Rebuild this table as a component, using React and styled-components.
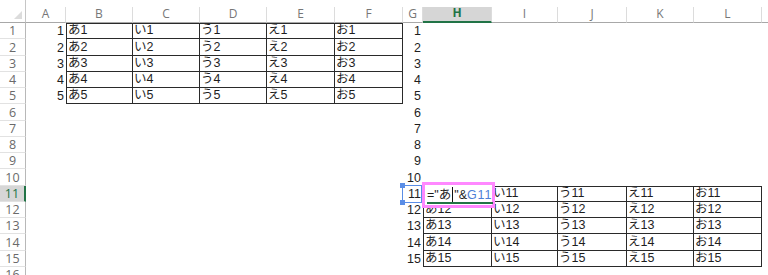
import styled, { createGlobalStyle } from "styled-components";

const GlobalStyle = createGlobalStyle`
  html, body { margin: 0; padding: 0; background: #fff; overflow: hidden; }
  body { font-family: "Liberation Sans", "Noto Sans CJK JP", sans-serif; }
`;

const colWidths = [26, 40, 67, 67, 67, 68, 68, 20, 69, 66, 69, 67, 68];
const letters = ["A", "B", "C", "D", "E", "F", "G", "H", "I", "J", "K", "L"];
const kana = ["あ", "い", "う", "え", "お"];
const green = "#217346";

const Sheet = styled.div`
  position: relative;
  display: grid;
  grid-template-columns: ${colWidths.map((w) => w + "px").join(" ")} 1fr;
  grid-template-rows: 23px repeat(16, 16.27px);
  width: 768px;
  height: 275px;
  overflow: hidden;
`;

const Corner = styled.div`
  position: relative;
  border-right: 1px solid #c6c6c6;
  border-bottom: 1px solid #a8a8a8;
  &::after {
    content: "";
    position: absolute;
    right: 3px;
    bottom: 3px;
    border-style: solid;
    border-width: 0 0 8px 8px;
    border-color: transparent transparent #dcdcdc transparent;
  }
`;

const ColHead = styled.div`
  margin-top: 7px;
  display: flex;
  align-items: flex-end;
  justify-content: center;
  padding-bottom: 1px;
  font-family: "Open Sans", "Liberation Sans", sans-serif;
  font-size: 12px;
  line-height: 14px;
  font-weight: ${(p) => (p.$active ? 700 : 400)};
  color: ${(p) => (p.$active ? green : "#777")};
  background: ${(p) => (p.$active ? "#d6d6d6" : "#fff")};
  border-right: 1px solid #dcdcdc;
  border-bottom: ${(p) => (p.$active ? `2px solid ${green}` : "1px solid #a8a8a8")};
  box-sizing: border-box;
`;

const Filler = styled.div`
  margin-top: 7px;
  border-bottom: 1px solid #a8a8a8;
`;

const RowHead = styled.div`
  display: flex;
  align-items: flex-end;
  justify-content: center;
  font-family: "Open Sans", "Liberation Sans", sans-serif;
  font-size: 12.5px;
  line-height: 15px;
  color: ${(p) => (p.$active ? green : "#6a6a6a")};
  background: ${(p) => (p.$active ? "#d6d6d6" : "#fff")};
  border-right: ${(p) => (p.$active ? `2px solid ${green}` : "1px solid #b8b8b8")};
  border-bottom: 1px solid #e2e2e2;
  box-sizing: border-box;
`;

const Cell = styled.div`
  display: flex;
  align-items: flex-end;
  justify-content: ${(p) => (p.$right ? "flex-end" : "flex-start")};
  padding: 0 ${(p) => (p.$right ? "2px" : "0")} 0 ${(p) => (p.$right ? "0" : "1px")};
  font-size: 12.5px;
  line-height: 15px;
  color: #1e1e1e;
  white-space: nowrap;
  overflow: hidden;
  box-sizing: border-box;
  border-top: ${(p) => (p.$top ? "1px solid #2a2a2a" : "none")};
  border-left: ${(p) => (p.$left ? "1px solid #2a2a2a" : "none")};
  border-right: ${(p) => (p.$boxed ? "1px solid #2a2a2a" : "none")};
  border-bottom: ${(p) => (p.$boxed ? "1px solid #2a2a2a" : "none")};
`;

const RefBox = styled.div`
  position: absolute;
  left: 402px;
  top: 185px;
  width: 20px;
  height: 18px;
  border: 1px solid #5b8ee6;
  box-sizing: border-box;
`;

const Handle = styled.span`
  position: absolute;
  left: -3px;
  ${(p) => (p.$bottom ? "bottom: -3px;" : "top: -3px;")}
  width: 5px;
  height: 5px;
  background: #5b8ee6;
`;

const Editor = styled.div`
  position: absolute;
  left: 422px;
  top: 182px;
  width: 73px;
  height: 26px;
  border: 3px solid #ff88ff;
  box-sizing: border-box;
  background: #fff;
  display: flex;
  align-items: flex-start;
  padding: 2px 0 0 2px;
`;

const Formula = styled.span`
  display: inline-flex;
  align-items: flex-end;
  font-size: 12.5px;
  line-height: 14px;
  color: #1e1e1e;
  border-bottom: 2px solid ${green};
  padding-right: 1px;
  white-space: nowrap;
`;

const Caret = styled.span`
  display: inline-block;
  width: 1px;
  height: 15px;
  margin: 0 1px;
  background: #111;
`;

const Ref = styled.span`
  color: #4d7fd6;
  letter-spacing: 0.8px;
`;

function cellFor(r, c) {
  if (c === 1 && r <= 5) return { text: r, right: true };
  if (c >= 2 && c <= 6 && r <= 5)
    return { text: kana[c - 2] + r, boxed: true, top: r === 1, left: c === 2 };
  if (c === 7 && r <= 15) return { text: r, right: true };
  if (c >= 8 && c <= 12 && r >= 11 && r <= 15)
    return {
      text: r === 11 && c === 8 ? "" : kana[c - 8] + r,
      boxed: true,
      top: r === 11,
      left: c === 8,
    };
  return { text: "" };
}

export default function App() {
  const rows = Array.from({ length: 16 }, (_, i) => i + 1);
  return (
    <>
      <GlobalStyle />
      <Sheet>
        <Corner />
        {letters.map((l) => (
          <ColHead key={l} $active={l === "H"}>{l}</ColHead>
        ))}
        <Filler />
        {rows.map((r) => (
          <>
            <RowHead key={"h" + r} $active={r === 11}>{r}</RowHead>
            {letters.map((_, i) => {
              const c = cellFor(r, i + 1);
              return (
                <Cell
                  key={r + "-" + i}
                  $right={c.right}
                  $boxed={c.boxed}
                  $top={c.top}
                  $left={c.left}
                >
                  {c.text}
                </Cell>
              );
            })}
            <div key={"f" + r} />
          </>
        ))}
        <RefBox>
          <Handle />
          <Handle $bottom />
        </RefBox>
        <Editor>
          <Formula>
            ="あ<Caret />"&amp;<Ref>G11</Ref>
          </Formula>
        </Editor>
      </Sheet>
    </>
  );
}
